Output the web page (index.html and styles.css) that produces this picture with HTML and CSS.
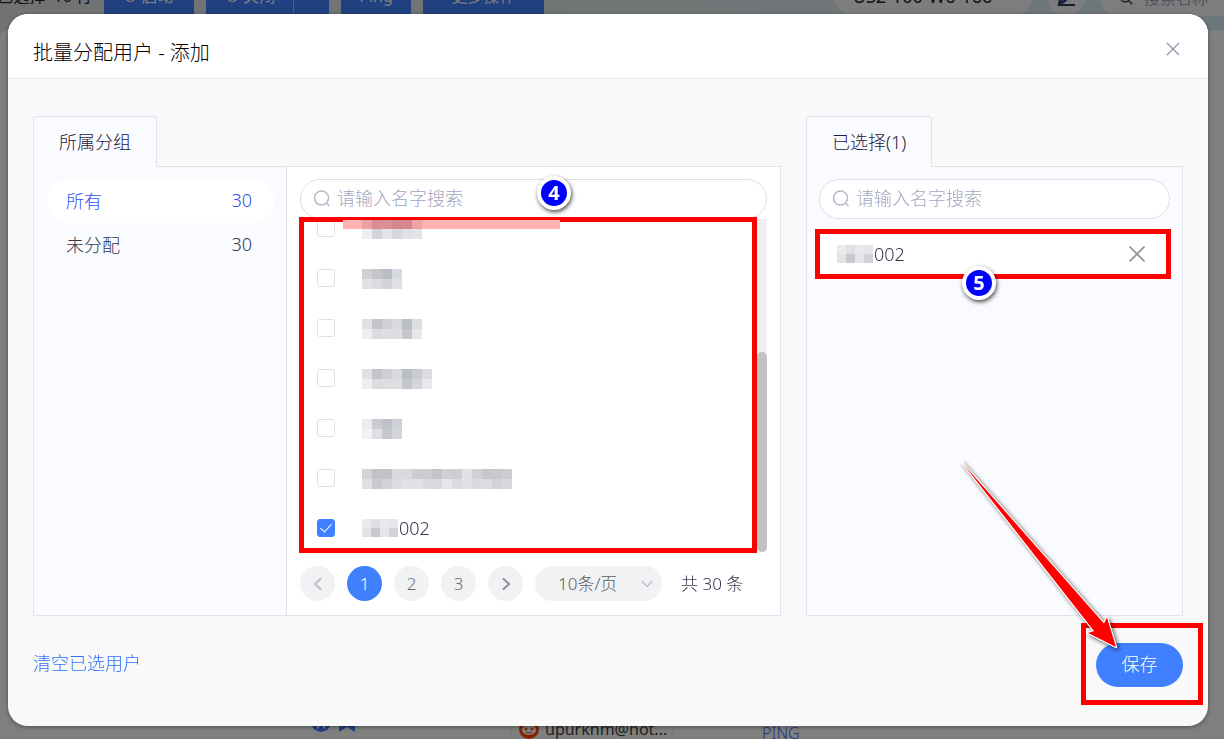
FILE: index.html
```html
<!DOCTYPE html>
<html lang="zh-CN">
<head>
<meta charset="utf-8">
<meta name="viewport" content="width=device-width, initial-scale=1">
<title>批量分配用户</title>
<link rel="stylesheet" href="styles.css">
</head>
<body>
<div class="page">
  <div class="toolbar">
    <span class="count">已选择&nbsp; 10 行</span>
    <button class="tool w-start">⏻ 启动</button>
    <button class="tool w-stop">⏻ 关闭<span class="split"></span></button>
    <button class="tool w-ping">Ping</button>
    <button class="tool w-more">更多操作</button>
    <div class="right-tools">
      <span class="server">US2-100-W6-166</span>
      <button class="edit" aria-label="编辑">
        <svg width="20" height="20" viewBox="0 0 20 20"><path d="M3 17l1-6L13 2l4 4-9 9z" fill="#4d6bd0"/><path d="M2 18h17" stroke="#333a55" stroke-width="2"/><path d="M3 17l1-6 9-9 4 4-9 9z" fill="none" stroke="#333a55" stroke-width="2"/></svg>
      </button>
      <label class="find">
        <svg width="18" height="18" viewBox="0 0 18 18"><circle cx="8" cy="8" r="6" fill="none" stroke="#444b60" stroke-width="2"/><path d="M12 12l5 5" stroke="#444b60" stroke-width="2"/></svg>
        <input type="text" placeholder="搜索名称" aria-label="搜索名称">
      </label>
    </div>
  </div>
  <div class="content"></div>
  <div class="row-under">
    <span class="marks">
      <svg width="20" height="20" viewBox="0 0 20 20"><circle cx="10" cy="10" r="10" fill="#4080ff"/><path d="M5 8l2 7 3-5 3 5 2-7" fill="none" stroke="#fff" stroke-width="2"/></svg>
      <svg width="16" height="20" viewBox="0 0 16 20"><path d="M0 0h16v20l-8-5-8 5z" fill="#4080ff"/></svg>
    </span>
    <span class="account">
      <svg width="20" height="20" viewBox="0 0 20 20"><circle cx="10" cy="10" r="10" fill="#ff4500"/><ellipse cx="10" cy="11" rx="7" ry="5" fill="#fff"/><circle cx="7" cy="10" r="1.4" fill="#ff4500"/><circle cx="13" cy="10" r="1.4" fill="#ff4500"/><path d="M7 13q3 2 6 0" fill="none" stroke="#ff4500"/></svg>
      upurkhm@hot...
    </span>
    <a class="ping-link" href="#">PING</a>
  </div>
</div>
<div class="mask"></div>

<div class="modal" role="dialog" aria-labelledby="modalTitle">
  <div class="modal-header">
    <h2 id="modalTitle">批量分配用户 - 添加</h2>
    <button class="close" aria-label="关闭">
      <svg width="14" height="14" viewBox="0 0 14 14"><path d="M1 1l12 12M13 1L1 13" stroke="#9095a8" stroke-width="1.3"/></svg>
    </button>
  </div>

  <div class="modal-body">
    <div class="box box-left">
      <div class="tab">所属分组</div>
      <div class="panel">
        <div class="groups">
          <button class="group active"><span>所有</span><span>30</span></button>
          <button class="group"><span>未分配</span><span>30</span></button>
        </div>
        <div class="users">
          <label class="search">
            <svg width="18" height="18" viewBox="0 0 18 18"><circle cx="8.5" cy="8" r="7" fill="none" stroke="#b4bacd" stroke-width="1.5"/><path d="M13.5 13l3 3" stroke="#b4bacd" stroke-width="1.5"/></svg>
            <input type="text" placeholder="请输入名字搜索" aria-label="请输入名字搜索">
          </label>
          <div class="list-wrap">
            <div class="list" id="userList"></div>
            <div class="scrollbar"><div class="thumb"></div></div>
            <div class="mark mark-list"></div>
            <svg class="strike" width="217" height="9" viewBox="0 0 217 9">
              <path d="M0 0h217v9H0z" fill="#ffb2b2"/>
              <path d="M19 0h10v9H19z" fill="#e9a1a4"/><path d="M29 0h10v9H29z" fill="#dc8b90"/>
              <path d="M39 0h10v9H39z" fill="#dc9094"/><path d="M49 0h20v9H49z" fill="#d6878b"/>
              <path d="M69 0h10v9H69z" fill="#f0a2a4"/>
            </svg>
            <span class="step step-4">4</span>
          </div>
          <div class="pager">
            <button class="pg" aria-label="上一页"><svg width="10" height="14" viewBox="0 0 10 14"><path d="M8 1.5L2 7l6 5.5" fill="none" stroke="#b9bdca" stroke-width="2"/></svg></button>
            <button class="pg on">1</button>
            <button class="pg">2</button>
            <button class="pg">3</button>
            <button class="pg" aria-label="下一页"><svg width="10" height="14" viewBox="0 0 10 14"><path d="M2 1.5L8 7l-6 5.5" fill="none" stroke="#8d9099" stroke-width="2"/></svg></button>
            <div class="size">
              <select aria-label="每页条数"><option>10条/页</option><option>20条/页</option><option>50条/页</option></select>
              <svg width="12" height="8" viewBox="0 0 12 8"><path d="M1 1l5 5.5L11 1" fill="none" stroke="#b9bdca" stroke-width="1.3"/></svg>
            </div>
            <span class="total">共 30 条</span>
          </div>
        </div>
      </div>
    </div>

    <div class="box box-right">
      <div class="tab">已选择(1)</div>
      <div class="panel">
        <div class="chosen">
          <label class="search">
            <svg width="18" height="18" viewBox="0 0 18 18"><circle cx="8.5" cy="8" r="7" fill="none" stroke="#b4bacd" stroke-width="1.5"/><path d="M13.5 13l3 3" stroke="#b4bacd" stroke-width="1.5"/></svg>
            <input type="text" placeholder="请输入名字搜索" aria-label="请输入名字搜索">
          </label>
          <div class="picked">
            <span class="name" id="pickedName"></span>
            <button class="remove" aria-label="移除">
              <svg width="16" height="16" viewBox="0 0 16 16"><path d="M0.5 0.5l15 15M15.5 0.5l-15 15" stroke="#909399" stroke-width="1.7"/></svg>
            </button>
            <div class="mark mark-picked"></div>
            <span class="step step-5">5</span>
          </div>
        </div>
      </div>
    </div>
  </div>

  <div class="modal-footer">
    <a class="clear" href="#">清空已选用户</a>
    <div class="save-wrap">
      <button class="save">保存</button>
      <div class="mark mark-save"></div>
    </div>
  </div>

  <svg class="arrow" width="180" height="210" viewBox="0 0 180 210">
    <path d="M12 12.5L154 173.5l3-6 9 29.500-28-14 6-2z" fill="#f00" stroke="#fff" stroke-width="2.4" stroke-linejoin="round"/>
    <path d="M12 12.5L154 173.5l3-6 9 29.500-28-14 6-2z" fill="#f00"/>
  </svg>
</div>
<script src="script.js"></script>
</body>
</html>
```
FILE: styles.css
```css
* {
  box-sizing: border-box;
}
body {
  margin: 0;
  overflow: hidden;
  font-family: "Noto Sans", "Noto Sans CJK SC", sans-serif;
  font-size: 18px;
  font-weight: 300;
  color: #35384e;
}
button, input, select {
  font: inherit;
  color: inherit;
  border: none;
  padding: 0;
  background: none;
}
button {
  cursor: pointer;
}
a {
  text-decoration: none;
}

/* page behind the dialog */
.page {
  height: 100vh;
  display: flex;
  flex-direction: column;
  overflow: hidden;
  background: linear-gradient(90deg, #e4e4e4, #e2eaec 50%, #d8eef6);
}
.toolbar {
  display: flex;
  gap: 12px;
  height: 40px;
  margin-top: -24px;
  line-height: 40px;
  font-size: 16px;
  font-weight: 400;
}
.count {
  width: 92px;
  direction: rtl;
  white-space: nowrap;
  color: #222;
}
.tool {
  background: #4080ff;
  color: #fff;
}
.w-start {
  width: 90px;
}
.w-stop {
  display: flex;
  justify-content: space-between;
  width: 123px;
  padding: 0 35px 0 20px;
}
.split {
  border-right: 1px solid #a0bfff;
}
.w-ping {
  width: 70px;
}
.w-more {
  width: 121px;
}
.right-tools {
  display: flex;
  gap: 14px;
  margin-left: auto;
}
.server {
  width: 199px;
  padding-right: 22px;
  border-radius: 20px;
  background: #fbfbfb;
  color: #222;
  font-size: 18px;
  text-align: center;
}
.edit {
  display: flex;
  align-items: flex-end;
  justify-content: center;
  width: 38px;
  padding-bottom: 9px;
  border-radius: 20px;
  background: #fbfbfb;
}
.find {
  display: flex;
  align-items: center;
  gap: 11px;
  width: 125px;
  padding: 4px 0 0 20px;
  border-radius: 20px 0 0 20px;
  background: #fbfbfb;
}
.find input {
  width: 80px;
}
.content {
  flex: 1;
  margin-top: 14px;
  border-radius: 8px 0 0 0;
  background: #fff;
}
.row-under {
  display: grid;
  grid-template-columns: 200px 251px 1fr;
  height: 30px;
  padding-left: 311px;
  background: #fff;
  font-size: 16px;
}
.marks {
  display: flex;
  gap: 8px;
  padding-top: 3px;
}
.account {
  display: flex;
  align-items: center;
  gap: 6px;
  width: 162px;
  height: 40px;
  padding-left: 7px;
  border: solid #f0f0f6;
  border-width: 0 1px;
  color: #444;
  font-weight: 400;
}
.ping-link {
  line-height: 48px;
  color: #4a6cf0;
}
.mask {
  position: fixed;
  inset: 0;
  background: rgba(0, 0, 0, 0.5);
}

/* dialog */
.modal {
  position: fixed;
  inset: 14px 16px 13px 8px;
  display: flex;
  flex-direction: column;
  border-radius: 20px;
  background: #f9f9f9;
  box-shadow: 0 1px 4px rgba(0, 0, 0, 0.4);
}
.modal-header {
  display: flex;
  align-items: center;
  justify-content: space-between;
  height: 65px;
  padding: 14px 28px 0 25px;
  border-bottom: 1px solid #e7e8ea;
  border-radius: 20px 20px 0 0;
  background: #fff;
}
.modal-header h2 {
  margin: 0;
  font-size: 20px;
  font-weight: 300;
  line-height: 30px;
  color: #000;
}
.close {
  display: flex;
  padding-bottom: 8px;
}
.modal-body {
  flex: 1;
  display: flex;
  gap: 25px;
  min-height: 0;
  padding: 37px 25px 0;
}
.box {
  display: flex;
  flex-direction: column;
}
.box-left {
  flex: 1;
}
.box-right {
  width: 377px;
}
.tab {
  align-self: flex-start;
  z-index: 1;
  height: 51px;
  margin-bottom: -1px;
  padding: 0 25px;
  border: 1px solid #e0e3ee;
  border-bottom: none;
  border-radius: 4px 4px 0 0;
  background: #fafbfe;
  line-height: 50px;
  color: #1c2040;
}
.panel {
  flex: 1;
  display: flex;
  min-height: 0;
  border: 1px solid #e0e3ee;
  background: #fafbfe;
}
.groups {
  width: 253px;
  padding: 12px 12px 12px 13px;
  border-right: 1px solid #e0e3ee;
}
.group {
  display: flex;
  align-items: center;
  justify-content: space-between;
  width: 100%;
  height: 44px;
  padding: 0 22px 2px 19px;
  border-radius: 22px;
}
.group.active {
  background: #fff;
  color: #2f50f5;
}
.users {
  flex: 1;
  display: flex;
  flex-direction: column;
  padding: 12px 13px 14px;
  background: #fff;
}
.search {
  display: flex;
  flex: none;
  align-items: center;
  gap: 6px;
  height: 40px;
  padding: 0 12px;
  border: 1px solid #dcdfe9;
  border-radius: 20px;
  background: #fff;
}
.search input {
  flex: 1;
  min-width: 0;
  padding-bottom: 2px;
  outline: none;
}
input::placeholder {
  color: #9fa6bf;
  opacity: 1;
}

/* user list, scrolled to its end */
.list-wrap {
  position: relative;
  flex: 1;
  display: flex;
  min-height: 0;
}
.list {
  flex: 1;
  display: flex;
  flex-direction: column;
  justify-content: flex-end;
  margin-bottom: -1px;
  overflow: hidden;
}
.user {
  flex: none;
  display: flex;
  align-items: center;
  gap: 27px;
  height: 50px;
  padding-left: 17px;
}
.user input {
  appearance: none;
  display: flex;
  align-items: center;
  justify-content: center;
  width: 18px;
  height: 18px;
  margin: 0;
  border: 1px solid #dcdfe9;
  border-radius: 3px;
  background: #fff;
}
.user input:checked {
  border-color: #4080ff;
  background: #4080ff;
}
.user input:checked::after {
  content: "";
  width: 5px;
  height: 10px;
  margin-bottom: 3px;
  border: solid #fff;
  border-width: 0 1px 1px 0;
  transform: rotate(42deg);
}
.name {
  display: flex;
  align-items: center;
  gap: 1px;
}
.user .name:not(.shown) {
  padding-top: 2px;
}
.scrollbar {
  display: flex;
  align-items: flex-end;
  width: 10px;
  background: #f1f1f1;
}
.thumb {
  width: 10px;
  height: 60%;
  border-radius: 5px;
  background: #c1c1c1;
}

/* pager */
.pager {
  display: flex;
  align-items: center;
  gap: 12px;
  margin-top: 14px;
  font-size: 17px;
  line-height: 24px;
  white-space: nowrap;
}
.pg {
  display: flex;
  align-items: center;
  justify-content: center;
  width: 35px;
  height: 35px;
  border-radius: 50%;
  background: #f1f2f4;
  color: #6c6e75;
}
.pg.on {
  background: #4080ff;
  color: #fff;
}
.size {
  position: relative;
  width: 127px;
  height: 35px;
}
.size select {
  appearance: none;
  width: 100%;
  height: 100%;
  padding-left: 23px;
  border-radius: 18px;
  background: #f1f2f4;
  color: #5c5c5c;
}
.size svg {
  position: absolute;
  top: 14px;
  right: 9px;
  pointer-events: none;
}
.total {
  margin-left: 7px;
}

/* chosen users */
.chosen {
  flex: 1;
  padding: 12px;
}
.picked {
  position: relative;
  display: flex;
  align-items: center;
  justify-content: space-between;
  height: 42px;
  margin-top: 14px;
  padding: 0 25px 0 18px;
  border-radius: 12px;
  background: #fff;
}
.remove {
  display: flex;
}

/* footer */
.modal-footer {
  display: flex;
  justify-content: space-between;
  height: 110px;
  padding: 27px 25px 0;
  line-height: 40px;
}
.clear {
  color: #2e72ff;
}
.save-wrap {
  position: relative;
  height: 44px;
}
.save {
  display: block;
  width: 87px;
  height: 44px;
  padding-bottom: 2px;
  border-radius: 22px;
  background: #4080ff;
  color: #fff;
}

/* guide marks on top of the dialog */
.mark {
  position: absolute;
  border: 5px solid #f00;
  pointer-events: none;
}
.mark-list {
  inset: -2px 10px -1px -1px;
}
.mark-picked {
  inset: -4px -1px -4px -4px;
}
.mark-save {
  inset: -20px -20px -18px -15px;
}
.strike {
  position: absolute;
  top: 1px;
  left: 43px;
}
.step {
  position: absolute;
  width: 34px;
  height: 34px;
  border: 4px solid #fff;
  border-radius: 50%;
  background: #00f;
  box-shadow: 1px 2px 4px rgba(0, 0, 0, 0.7);
  font: bold 20px/26px "Open Sans", sans-serif;
  color: #fff;
  text-align: center;
}
.step-4 {
  top: -43px;
  left: 237px;
}
.step-5 {
  top: 33px;
  left: 143px;
}
.arrow {
  position: absolute;
  right: 78px;
  bottom: 66px;
  filter: drop-shadow(2px 2px 2px rgba(0, 0, 0, 0.6));
  pointer-events: none;
}
```
FILE: script.js
```js
// each user: two rows of grey blocks that hide the name, then the visible rest
var users = [
  {top: "dcdcdf c4c5cb c8c9ce c0c1c6 c0c1c6 d8d9dd", bottom: "eeeef0 d3d4d8 e3e4e8 d7d8dc e1e2e6 e4e5e8"},
  {top: "d0d1d6 c4c5ca babec7 d9dadf", bottom: "e1e2e7 dbdce0 d3d4d8 e0e1e6"},
  {top: "e0e1e6 c3c4ca cfd0d5 d8d9dd babec7 dcdde1", bottom: "eeeef0 dbdce0 dddee2 dddee2 c5c6cd e6e7ea"},
  {top: "e0e1e6 c3c4ca cfd0d5 d8d9dd babec7 cbccd2 dbdce0", bottom: "efeff1 dbdce0 dddee2 dddee2 c5c6cc d4d5da e7e8eb"},
  {top: "ebecee cbccd2 bfc2ca cfd0d6", bottom: "f1f2f4 dedfe3 c7c8ce d4d5da"},
  {top: "d3d4d9 c2c3c9 c2c3c9 d8d9de d9dadf cccdd3 cbccd2 c4c5cb cfd0d5 cdced4 e1e2e7 d0d1d6 c6c7cd c8c9cf cbccd2",
   bottom: "e0e1e6 c9cad0 d3d4d9 dcdde1 e0e1e5 e1e2e6 dadbdf d8d9dd e6e7ea dbdce0 e1e2e6 dadbe0 dcdde2 d2d3d8 d7d8dd"},
  {top: "ebebed dfe0e4 e8e9eb e5e6ea", bottom: "e2e3e7 c8c9cf e5e6ea d2d3d8", size: 9, rest: "002", checked: true}
];

function blocks(u) {
  var size = u.size || 10;
  var rows = [u.top.split(" "), u.bottom.split(" ")];
  var w = rows[0].length * size;
  var text = "<svg width='" + w + "' height='" + size * 2 + "' shape-rendering='crispEdges'>";
  for (var r = 0; r < 2; r++) {
    for (var c = 0; c < rows[r].length; c++) {
      text += "<rect x='" + c * size + "' y='" + r * size + "' width='" + size + "' height='" + size + "' fill='#" + rows[r][c] + "'/>";
    }
  }
  return text + "</svg>" + (u.rest || "");
}

var html = "";
for (var i = 0; i < users.length; i++) {
  html += "<label class='user'><input type='checkbox' aria-label='用户 " + (i + 1) + "'" + (users[i].checked ? " checked" : "") + "><span class='name" + (users[i].rest ? " shown" : "") + "'>" + blocks(users[i]) + "</span></label>";
}
document.getElementById("userList").innerHTML = html;
document.getElementById("pickedName").innerHTML = blocks(users[6]);
```
